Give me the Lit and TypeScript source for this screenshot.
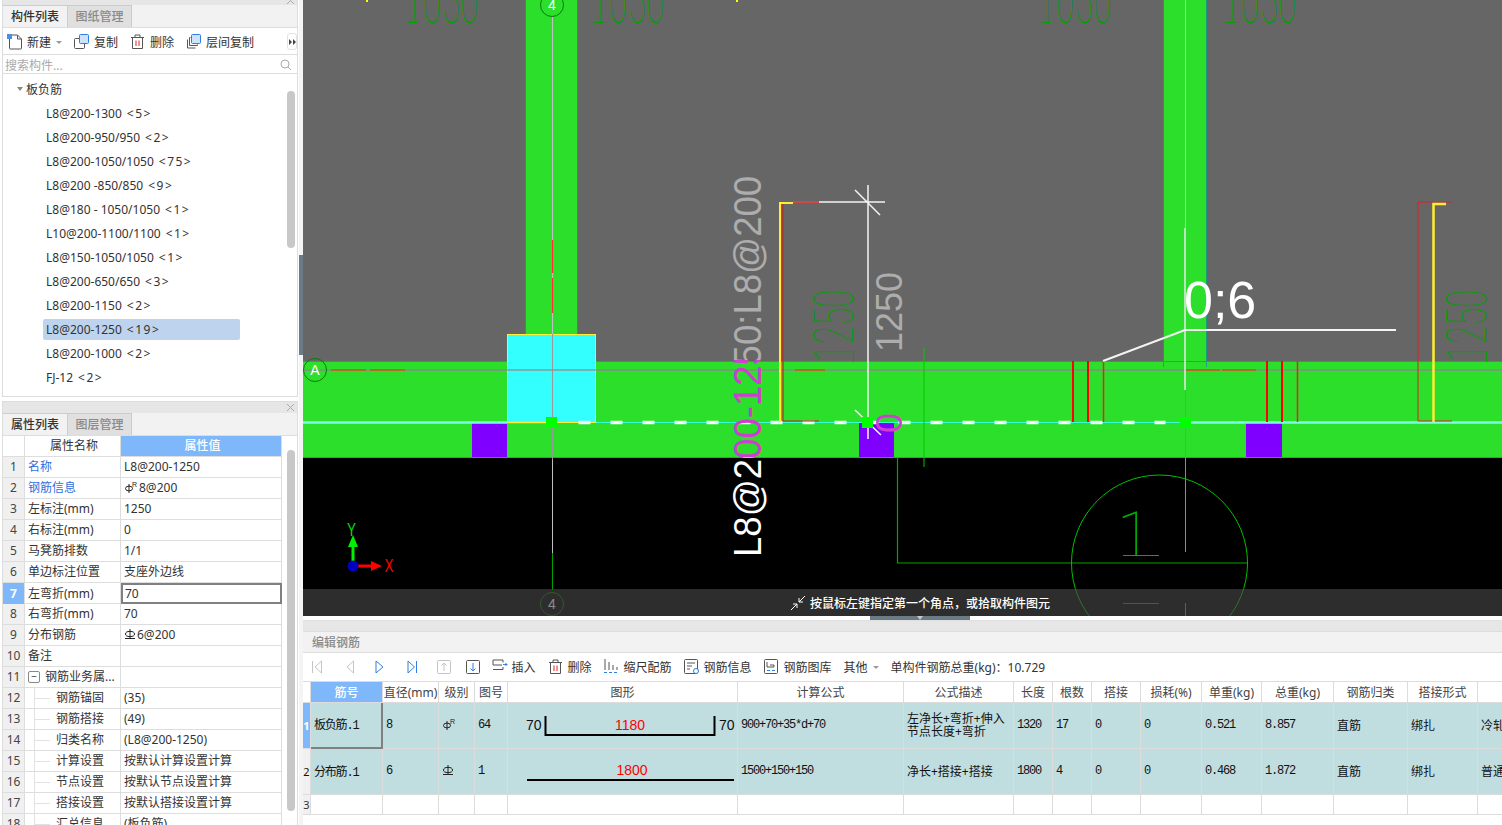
import { LitElement, html, svg, css } from 'lit';
import { customElement } from 'lit/decorators.js';

const TREE = [
  ['L8@200-1300', '<5>'], ['L8@200-950/950', '<2>'], ['L8@200-1050/1050', '<75>'], ['L8@200 -850/850', '<9>'],
  ['L8@180 - 1050/1050', '<1>'], ['L10@200-1100/1100', '<1>'], ['L8@150-1050/1050', '<1>'], ['L8@200-650/650', '<3>'],
  ['L8@200-1150', '<2>'], ['L8@200-1250', '<19>'], ['L8@200-1000', '<2>'], ['FJ-12', '<2>'],
];

// kind: link = blue name, child = indented under the tree line
const PROPS: { name: string; value: string; kind?: string; bar?: string }[] = [
  { name: '名称', value: 'L8@200-1250', kind: 'link' },
  { name: '钢筋信息', value: '8@200', kind: 'link', bar: 'r' },
  { name: '左标注(mm)', value: '1250' },
  { name: '右标注(mm)', value: '0' },
  { name: '马凳筋排数', value: '1/1' },
  { name: '单边标注位置', value: '支座外边线' },
  { name: '左弯折(mm)', value: '70' },
  { name: '右弯折(mm)', value: '70' },
  { name: '分布钢筋', value: '6@200', bar: 'd' },
  { name: '备注', value: '' },
  { name: '钢筋业务属...', value: '', kind: 'group' },
  { name: '钢筋锚固', value: '(35)', kind: 'child' },
  { name: '钢筋搭接', value: '(49)', kind: 'child' },
  { name: '归类名称', value: '(L8@200-1250)', kind: 'child' },
  { name: '计算设置', value: '按默认计算设置计算', kind: 'child' },
  { name: '节点设置', value: '按默认节点设置计算', kind: 'child' },
  { name: '搭接设置', value: '按默认搭接设置计算', kind: 'child' },
  { name: '汇总信息', value: '(板负筋)', kind: 'child' },
];

const HEAD = ['', '筋号', '直径(mm)', '级别', '图号', '图形', '计算公式', '公式描述', '长度', '根数', '搭接', '损耗(%)', '单重(kg)', '总重(kg)', '钢筋归类', '搭接形式', ''];

const barIcon = (kind: string) => kind === 'r'
  ? svg`<svg class="bar" width="14" height="12" viewBox="0 0 14 12"><ellipse cx="5" cy="6.5" rx="3.5" ry="2.4" fill="none" stroke="#222"/><path d="M5 2v9" stroke="#222"/><text class="sup" x="8" y="5">R</text></svg>`
  : svg`<svg class="bar" width="12" height="12" viewBox="0 0 12 12"><ellipse cx="6" cy="5" rx="4.5" ry="2.6" fill="none" stroke="#222"/><path d="M6 0v9M1 9.5h10" stroke="#222"/></svg>`;

const ICONS: Record<string, any> = {
  add: svg`<path d="M2.500 4v10a1 1 0 0 0 1 1h10a1 1 0 0 0 1-1V5l-4-4H5" fill="none" stroke="#555"/><path d="M10.500 1v4h4" fill="none" stroke="#555"/><rect x="0" y="0" width="5" height="5" fill="#4a90e2"/>`,
  copy: svg`<rect x="5.5" y=".5" width="9" height="9" rx="1" fill="#cfe2fb" stroke="#2f7fe0"/><path d="M5 4.5H1.5a1 1 0 0 0-1 1v8a1 1 0 0 0 1 1h8a1 1 0 0 0 1-1V10" fill="none" stroke="#555"/>`,
  del: svg`<path d="M1 3.5h13M5 3V1h5v2M2.5 4v10.5h10V4" fill="none" stroke="#555"/><path d="M6 6.5v5.5M9 6.5v5.5" stroke="#e02020"/>`,
  floor: svg`<rect x="5.5" y=".5" width="9" height="9" rx="1" fill="#cfe2fb" stroke="#2f7fe0"/><path d="M4.5 3.5h-1v8h8v-1M1.5 5.5v8.500h8" fill="none" stroke="#555"/>`,
  insert: svg`<path d="M11 3.500V1H1v5h9M1 10.500h10V8" fill="none" stroke="#555"/><path d="M11 5.500h4M13.500 4l1.500 1.500L13.500 7" fill="none" stroke="#2f7fe0"/>`,
  scale: svg`<path d="M1 0v11M5 3v8M9 6v5M13 8v3" stroke="#555"/><path d="M0 13.500h3M5 13.500h3M10 13.500h3" stroke="#2f7fe0"/>`,
  info: svg`<rect x=".5" y=".5" width="13" height="14" rx="1" fill="none" stroke="#555"/><path d="M3 4h8M3 7h5M3 10h3" stroke="#555"/><circle cx="12" cy="12" r="2.500" fill="#fff" stroke="#2f7fe0"/>`,
  lib: svg`<rect x=".5" y=".5" width="13" height="14" rx="1" fill="none" stroke="#555"/><path d="M3 3v5h7V6H6" fill="none" stroke="#555"/><path d="M3 11.500h3M8 11.500h3" stroke="#2f7fe0"/>`,
};

const icon = (name: string) => html`<svg class="ico" width="16" height="16" viewBox="0 0 16 16">${ICONS[name]}</svg>`;

const closeIcon = html`<svg class="close" width="9" height="9" viewBox="0 0 9 9"><path d="M1 1l7 7M8 1l-7 7" stroke="#aaa"/></svg>`;

const navIcon = (d: string, on: boolean) => html`<svg class="nav" width="10" height="14" viewBox="0 0 10 14"><path d=${d} fill="none" stroke=${on ? '#2f7fe0' : '#c4c4c4'}/></svg>`;

const boxIcon = (d: string, on: boolean) => html`<svg class="nav" width="14" height="14" viewBox="0 0 14 14"><rect x=".5" y=".5" width="13" height="13" rx="1" fill="none" stroke=${on ? '#555' : '#c4c4c4'}/><path d=${d} fill="none" stroke=${on ? '#2f7fe0' : '#c4c4c4'}/></svg>`;

@customElement('app-root')
export class AppRoot extends LitElement {
  static styles = css`
    :host {
      display: flex;
      width: 1502px;
      height: 825px;
      overflow: hidden;
      background: #fff;
      color: #333;
      font: 12px 'Noto Sans', 'Noto Sans CJK SC', sans-serif;
    }
    .left { width: 299px; flex: none; display: flex; flex-direction: column; }
    .splitter { width: 4px; flex: none; background: #f4f4f4; }
    .splitter i { display: block; height: 100px; margin-top: 255px; background: #6b7b85; }
    .main { flex: 1; min-width: 0; display: flex; flex-direction: column; }

    .panel { margin: 0 1px 0 2px; border: 1px solid #ddd; border-top: 0; display: flex; flex-direction: column; overflow: hidden; }
    .list-panel { height: 396px; flex: none; }
    .prop-panel { flex: 1; min-height: 0; margin-top: 4px; border-bottom: 0; }
    .strip { height: 5px; flex: none; background: #e6e6e6; display: flex; justify-content: flex-end; align-items: flex-end; overflow: hidden; }
    .prop-panel .strip { height: 12px; border-top: 1px solid #ddd; box-sizing: border-box; align-items: center; }
    .close { flex: none; margin-right: 2px; }
    .tabs { height: 23px; flex: none; display: flex; background: #f2f2f2; border-bottom: 1px solid #ddd; box-sizing: border-box; }
    .tab { width: 64px; text-align: center; line-height: 22px; font-weight: 500; color: #333; border-top: 1px solid #ccc; box-sizing: border-box; }
    .tab.off { width: 65px; background: #e0e0e0; color: #8a8a8a; border: 1px solid #ccc; border-bottom: 0; }

    .tools { height: 27px; flex: none; display: flex; align-items: center; gap: 12px; padding: 2px 0 0 4px; border-bottom: 1px solid #ddd; box-sizing: border-box; position: relative; }
    .tool { display: flex; align-items: center; gap: 4px; white-space: nowrap; }
    .ico, .nav { display: block; flex: none; }
    .caret { width: 0; height: 0; border: 3px solid transparent; border-top: 3px solid #999; border-bottom: 0; margin-left: 1px; }
    .more { position: absolute; right: 0; top: 5px; width: 10px; height: 17px; border: 1px solid #e4e4e4; border-radius: 3px; box-sizing: border-box; display: flex; align-items: center; justify-content: center; }
    .search { height: 19px; flex: none; display: flex; align-items: center; justify-content: space-between; padding: 1px 5px 0 2px; color: #aaa; border-bottom: 1px solid #ddd; box-sizing: border-box; }

    .tree { flex: 1; position: relative; padding-top: 3px; overflow: hidden; }
    .tree-row { height: 24px; display: flex; align-items: center; }
    .tree-root { padding-left: 14px; gap: 3px; }
    .tree-root b { width: 0; height: 0; border: 3.500px solid transparent; border-top: 4px solid #888; border-bottom: 0; }
    .leaf { margin-left: 40px; padding-left: 3px; width: 194px; height: 21px; line-height: 21px; border-radius: 2px; white-space: pre; display: flex; gap: 5px; }
    .leaf.sel { background: #bed4ee; }
    .leaf em { font-style: normal; letter-spacing: 1.500px; }
    .thumb { position: absolute; right: 2px; width: 8px; background: #c8c8c8; border-radius: 4px; }
    .tree .thumb { top: 17px; height: 157px; }
    .props .thumb { top: 14px; height: 361px; }

    .props { flex: 1; position: relative; overflow: hidden; }
    .prop-row { display: grid; grid-template-columns: 22px 96px 161px; height: 21px; width: 279px; box-sizing: border-box; border-bottom: 1px solid #ddd; line-height: 20px; }
    .prop-row > div { border-right: 1px solid #ddd; padding-left: 3px; white-space: nowrap; overflow: hidden; box-sizing: border-box; display: flex; align-items: center; }
    .prop-row .num { background: #f0f0f0; padding: 0; justify-content: center; color: #444; }
    .prop-row .num.on { background: #7eb8fa; color: #fff; font-weight: 700; }
    .prop-head { text-align: center; }
    .prop-head > div { justify-content: center; }
    .prop-head .on { background: #7eb8fa; color: #fff; font-weight: 500; }
    .link { color: #2f6fe0; }
    .child { padding-left: 31px !important; position: relative; }
    .child::before { content: ''; position: absolute; left: 9px; top: 0; bottom: 0; width: 15px; border-left: 1px solid #e2e2e2; background: linear-gradient(#e2e2e2, #e2e2e2) 0 10px / 100% 1px no-repeat; }
    .group { gap: 5px; }
    .group i { width: 10px; height: 10px; border: 1px solid #888; border-radius: 2px; font-style: normal; line-height: 9px; text-align: center; font-size: 10px; flex: none; }
    .editing { border: 2px solid #808080 !important; padding-left: 2px !important; height: 21px; background: #fff; }
    .bar { margin-right: 1px; }
    .sup { font: 7px 'Liberation Sans', sans-serif; fill: #222; }

    .cad { display: block; flex: none; }
    .stage { position: relative; height: 616px; flex: none; overflow: hidden; background: #000; }
    .hint { position: absolute; left: 0; right: 0; bottom: 0; height: 27px; padding-left: 35px; box-sizing: border-box; background: rgba(70, 70, 70, .64); color: #fff; display: flex; align-items: center; justify-content: center; gap: 4px; font-weight: 500; }
    .bubble { font: 14px 'Liberation Sans', sans-serif; }
    .mark { font-family: 'Liberation Sans', sans-serif; }
    .thin { font-family: Roboto, 'Liberation Sans', sans-serif; font-weight: 100; }
    .axis { font: 18px 'Liberation Sans', sans-serif; }

    .grip { height: 4px; flex: none; display: flex; justify-content: center; background: #fff; padding-left: 35px; }
    .grip i { display: flex; justify-content: center; width: 100px; background: #6b7b85; }
    .grip i::after { content: ''; width: 0; height: 0; border: 3px solid transparent; border-top: 4px solid #c8c8c8; border-bottom: 0; }
    .editor { flex: 1; min-height: 0; display: flex; flex-direction: column; overflow: hidden; }
    .editor .strip { height: 11px; border-top: 1px solid #e0e0e0; box-sizing: border-box; }
    .title { height: 22px; flex: none; background: #f2f2f2; color: #8a8a8a; line-height: 22px; padding-left: 9px; border-top: 1px solid #ddd; border-bottom: 1px solid #ddd; box-sizing: border-box; font-weight: 500; }
    .rebar-tools { height: 28px; flex: none; display: flex; align-items: center; gap: 12px; padding-left: 9px; white-space: nowrap; }
    .nav-group { display: flex; gap: 21.500px; }
    .box-group { display: flex; gap: 15px; margin-left: 8px; }
    .rebar-row { display: grid; grid-template-columns: 8px 72px 56px 36px 33px 230px 166px 110px 39px 39px 49px 61px 60px 72px 74px 70px 100px; width: 1275px; box-sizing: border-box; }
    .rebar-row > div { border-right: 1px solid #dcdcdc; border-bottom: 1px solid #dcdcdc; box-sizing: border-box; display: flex; align-items: center; padding-left: 3px; overflow: hidden; white-space: nowrap; position: relative; }
    .rebar-head { height: 22px; border-top: 1px solid #dcdcdc; color: #444; }
    .rebar-head > div { justify-content: center; padding: 0; }
    .rebar-head .on { background: #7eb8fa; color: #fff; font-weight: 500; }
    .rebar-body { height: 46px; color: #111; }
    .rebar-body > div { background: #c0dde0; padding-bottom: 2px; }
    .rebar-empty { height: 20px; }
    .rebar-row > .idx { padding: 0; justify-content: center; background: #f0f0f0; font-size: 11px; }
    .rebar-row > .idx.on { background: #7eb8fa; color: #fff; font-weight: 700; }
    .rebar-row > .picked { border-right: 2px solid #808080; border-bottom: 2px solid #808080; }
    .mono { font: 12px 'Liberation Mono', 'Noto Sans CJK SC', monospace; letter-spacing: -1.200px; }
    .wrap { white-space: normal !important; line-height: 13px; }
    .shape { position: absolute; left: 0; top: 0; }
    .shape text { font: 14px 'Liberation Sans', sans-serif; fill: #111; }
    .shape text.len { fill: #f00; }
  `;

  private renderCad() {
    return svg`
      <svg class="cad" width="1199" height="616" viewBox="303 0 1199 616">
        <defs>
          <linearGradient id="labelFill" gradientUnits="userSpaceOnUse" x1="0" y1="0" x2="403" y2="0">
            <stop offset="0.261" stop-color="#fff"/><stop offset="0.261" stop-color="#cf3fcf"/>
            <stop offset="0.514" stop-color="#cf3fcf"/><stop offset="0.514" stop-color="#adadad"/>
          </linearGradient>
        </defs>
        <rect x="303" y="0" width="1199" height="361" fill="#666"/>
        <rect x="303" y="458" width="1199" height="158" fill="#000"/>

        <path d="M367 0v2M737 0v2" stroke="#ff0" stroke-width="2"/>
        <rect x="525.500" y="-2" width="52" height="338" fill="#2bdf2b" stroke="#1a9a7a"/>
        <rect x="1163.500" y="-2" width="43" height="364" fill="#2bdf2b" stroke="#1a9a7a"/>
        <rect x="303" y="361" width="1199" height="97" fill="#2bdf2b"/>
        <path d="M303 361.500h1199M303 457.500h1199M1163.500 361v6M1206.500 361v6" stroke="#2a9a8a"/>

        <g class="thin" fill="#0a9a0a">
          <text font-size="62" transform="translate(404 23) scale(.55 1)">1050</text>
          <text font-size="62" transform="translate(590 23) scale(.55 1)">1050</text>
          <text font-size="62" transform="translate(1037 23) scale(.55 1)">1050</text>
          <text font-size="62" transform="translate(1222 23) scale(.55 1)">1050</text>
          <text font-size="56" transform="translate(853 362) rotate(-90) scale(.59 1)">1250</text>
          <text font-size="56" transform="translate(1486 362) rotate(-90) scale(.59 1)">1250</text>
        </g>
        <path d="M408 22.500h10M594 22.500h10M1041 22.500h10M1226 22.500h10M853.500 352v10M1486.500 352v10" stroke="#0a9a0a"/>

        <path d="M303 370h1199" stroke="#8a8a8a" stroke-width="1.500"/>
        <path d="M331 370h35M370 370h35M795 370h30M1185 370h35M1222 370h34" stroke="#c85a10" stroke-width="1.500"/>
        <path d="M552.500 0v553" stroke="#c0c0c0"/>
        <path d="M552.500 240v33M552.500 278v35" stroke="#ff3030"/>

        <rect x="507.500" y="334.500" width="88" height="88" fill="#33ffff" stroke="#ffee33"/>
        <path d="M552.500 334v126" stroke="#999"/>
        <path d="M507 370h89" stroke="#8a9a9a" stroke-width="1.500"/>

        <rect x="472" y="423" width="35" height="34" fill="#8000ff"/>
        <rect x="859" y="423" width="35" height="34" fill="#8000ff"/>
        <rect x="1246" y="423" width="36" height="34" fill="#8000ff"/>

        <path d="M303 422.500h204M1185 422.500h317" stroke="#7ffce8" stroke-width="2.500"/>
        <path d="M596 422.500h589" stroke="#33ffd8"/>
        <path d="M578.500 422.500h587" stroke="#eafff8" stroke-width="3.500" stroke-dasharray="12 20"/>
        <path d="M507 422.500h45" stroke="#ffee33" stroke-width="1.500"/>

        <path d="M1073 361v61M1088 361v61M1267 361v61M1282 361v61" stroke="#f00" stroke-width="2"/>
        <path d="M1103.500 361v61M1297.500 361v61" stroke="#f02020" stroke-width="1.500"/>
        <path d="M1185.500 0v228" stroke="#c0c0c0"/>
        <path d="M1185 228v162" stroke="#e8e8e8" stroke-width="1.500"/>
        <path d="M1185.500 390v162M1185.500 603v13" stroke="#8a8a8a"/>
        <path d="M1103 361l82-31h211" fill="none" stroke="#f4f4f4" stroke-width="2"/>
        <text class="mark" x="1184" y="318" font-size="52" fill="#fff">0;6</text>

        <path d="M793 203h-13v219" fill="none" stroke="#ffee33" stroke-width="2"/>
        <path d="M783 204v217h36" fill="none" stroke="#d02020" stroke-width="1.200"/>
        <path d="M793 202h26" stroke="#f04040" stroke-width="1.500"/>
        <path d="M819 202h66M868 185v254M855 190l25 25M855 410l26 25" stroke="#f4f4f4" stroke-width="1.500"/>
        <text class="mark" transform="translate(902 352) rotate(-90)" font-size="36" fill="#adadad">1250</text>
        <text class="mark" transform="translate(902 433) rotate(-90)" font-size="36" fill="#cf3fcf">0</text>
        <text class="mark" transform="translate(761 557) rotate(-90) scale(.95 1)" font-size="38.500" fill="url(#labelFill)">L8@200-1250:L8@200</text>

        <path d="M1418 202v219M1418 202h34M1418 421h34" fill="none" stroke="#e02020"/>
        <path d="M1446 204h-12.500v218" fill="none" stroke="#ffee33" stroke-width="2.500"/>

        <rect x="546" y="417" width="11" height="11" fill="#00ff00"/>
        <rect x="862" y="417" width="11" height="11" fill="#00ff00"/>
        <rect x="1180" y="417" width="11" height="11" fill="#00ff00"/>

        <path d="M924 348v119" stroke="#00c800"/>
        <path d="M897.500 458v105h350" fill="none" stroke="#00a800" stroke-width="1.200"/>
        <circle cx="1159.500" cy="563" r="88" fill="none" stroke="#00c000"/>
        <text class="thin" transform="translate(1117 555)" font-size="62" fill="#00b000">1</text>
        <path d="M1123 555.500h36M1123 603.500h36" stroke="#00b000"/>
        <path d="M552.500 553v37" stroke="#00a000"/>

        <circle cx="315" cy="370" r="11.500" fill="none" stroke="#0a7a0a"/>
        <text class="bubble" x="315" y="375" text-anchor="middle" fill="#fff">A</text>
        <circle cx="552" cy="5" r="11.500" fill="#2bdf2b" stroke="#0a7a0a"/>
        <text class="bubble" x="552" y="10" text-anchor="middle" fill="#fff">4</text>
        <circle cx="552" cy="604" r="11.500" fill="none" stroke="#0a7a0a"/>
        <text class="bubble" x="552" y="609" text-anchor="middle" fill="#fff">4</text>

        <path d="M353 566v-24" stroke="#00f000" stroke-width="3"/>
        <path d="M353 535l-5 12h10z" fill="#00f000"/>
        <path d="M353 566h20" stroke="#f00" stroke-width="3"/>
        <path d="M382 566l-11-5v10z" fill="#f00"/>
        <circle cx="353" cy="566" r="5.500" fill="#0000c0"/>
        <text class="axis" transform="translate(347 536) scale(.75 1)" fill="#00e000">Y</text>
        <text class="axis" transform="translate(384.500 572) scale(.75 1)" fill="#f00">X</text>
      </svg>
    `;
  }

  private renderProps() {
    return PROPS.map((p, i) => {
      const current = i === 6;
      return html`
        <div class="prop-row">
          <div class="num ${current ? 'on' : ''}">${i + 1}</div>
          <div class="${p.kind === 'link' ? 'link' : ''} ${p.kind === 'child' ? 'child' : ''} ${p.kind === 'group' ? 'group' : ''}">
            ${p.kind === 'group' ? html`<i>−</i>` : ''}${p.name}
          </div>
          <div class=${current ? 'editing' : ''}>${p.bar ? barIcon(p.bar) : ''}${p.value}</div>
        </div>
      `;
    });
  }

  render() {
    return html`
      <div class="left">
        <section class="panel list-panel">
          <div class="strip">${closeIcon}</div>
          <div class="tabs"><div class="tab">构件列表</div><div class="tab off">图纸管理</div></div>
          <div class="tools">
            <div class="tool">${icon('add')}新建<span class="caret"></span></div>
            <div class="tool">${icon('copy')}复制</div>
            <div class="tool">${icon('del')}删除</div>
            <div class="tool">${icon('floor')}层间复制</div>
            <div class="more"><svg width="7" height="6" viewBox="0 0 7 6"><path d="M0 0l3 3-3 3zM4 0l3 3-3 3z" fill="#444"/></svg></div>
          </div>
          <div class="search">
            <span>搜索构件...</span>
            <svg width="12" height="12" viewBox="0 0 12 12"><circle cx="5" cy="5" r="4" fill="none" stroke="#aaa"/><path d="M8 8l3 3" stroke="#aaa"/></svg>
          </div>
          <div class="tree">
            <div class="tree-row tree-root"><b></b><span>板负筋</span></div>
            ${TREE.map(([name, count], i) => html`<div class="tree-row"><div class="leaf ${i === 9 ? 'sel' : ''}"><span>${name}</span><em>${count}</em></div></div>`)}
            <div class="thumb"></div>
          </div>
        </section>
        <section class="panel prop-panel">
          <div class="strip">${closeIcon}</div>
          <div class="tabs"><div class="tab">属性列表</div><div class="tab off">图层管理</div></div>
          <div class="props">
            <div class="prop-row prop-head"><div></div><div>属性名称</div><div class="on">属性值</div></div>
            ${this.renderProps()}
            <div class="thumb"></div>
          </div>
        </section>
      </div>
      <div class="splitter"><i></i></div>
      <div class="main">
        <div class="stage">
          ${this.renderCad()}
          <div class="hint">
            <svg width="16" height="16" viewBox="0 0 16 16"><path d="M15 1L9 7M9 3v4h4M1 15l6-6M3 9h4v4" fill="none" stroke="#fff"/></svg>
            按鼠标左键指定第一个角点，或拾取构件图元
          </div>
        </div>
        <div class="grip"><i></i></div>
        <section class="editor">
          <div class="strip"></div>
          <div class="title">编辑钢筋</div>
          <div class="rebar-tools">
            <div class="nav-group">
              ${navIcon('M.5 1v12M9.500 1L3 7l6.500 6z', false)}
              ${navIcon('M9.500 1L3 7l6.500 6z', false)}
              ${navIcon('M1 1l7 6-7 6z', true)}
              ${navIcon('M1 1l6.500 6L1 13zM9.500 1v12', true)}
            </div>
            <div class="box-group">
              ${boxIcon('M7 11V3M4.500 5.500L7 3l2.500 2.500', false)}
              ${boxIcon('M7 3v8M4.500 8.500L7 11l2.500-2.500', true)}
            </div>
            <div class="tool">${icon('insert')}插入</div>
            <div class="tool">${icon('del')}删除</div>
            <div class="tool">${icon('scale')}缩尺配筋</div>
            <div class="tool">${icon('info')}钢筋信息</div>
            <div class="tool">${icon('lib')}钢筋图库</div>
            <div class="tool">其他<span class="caret"></span></div>
            <div>单构件钢筋总重(kg)：10.729</div>
          </div>
          <div class="rebar-row rebar-head">
            ${HEAD.map((h, i) => html`<div class=${i === 1 ? 'on' : ''}>${h}</div>`)}
          </div>
          <div class="rebar-row rebar-body">
            <div class="idx on">1</div>
            <div class="picked mono">板负筋.1</div>
            <div class="mono">8</div>
            <div>${barIcon('r')}</div>
            <div class="mono">64</div>
            <div>
              <svg class="shape" width="230" height="46" viewBox="0 0 230 46">
                <text x="18" y="27">70</text>
                <path d="M37.500 13v19h169V13" fill="none" stroke="#000" stroke-width="2"/>
                <text class="len" x="122" y="27" text-anchor="middle">1180</text>
                <text x="211" y="27">70</text>
              </svg>
            </div>
            <div class="mono">900+70+35*d+70</div>
            <div class="wrap">左净长+弯折+伸入节点长度+弯折</div>
            <div class="mono">1320</div><div class="mono">17</div><div class="mono">0</div><div class="mono">0</div>
            <div class="mono">0.521</div><div class="mono">8.857</div>
            <div>直筋</div><div>绑扎</div><div>冷轧带肋钢筋</div>
          </div>
          <div class="rebar-row rebar-body">
            <div class="idx">2</div>
            <div class="mono">分布筋.1</div>
            <div class="mono">6</div>
            <div>${barIcon('d')}</div>
            <div class="mono">1</div>
            <div>
              <svg class="shape" width="230" height="46" viewBox="0 0 230 46">
                <text class="len" x="124" y="26" text-anchor="middle">1800</text>
                <path d="M19 31h207" fill="none" stroke="#000" stroke-width="2"/>
              </svg>
            </div>
            <div class="mono">1500+150+150</div>
            <div>净长+搭接+搭接</div>
            <div class="mono">1800</div><div class="mono">4</div><div class="mono">0</div><div class="mono">0</div>
            <div class="mono">0.468</div><div class="mono">1.872</div>
            <div>直筋</div><div>绑扎</div><div>普通钢筋</div>
          </div>
          <div class="rebar-row rebar-empty">
            <div class="idx">3</div>
            ${HEAD.slice(1).map(() => html`<div></div>`)}
          </div>
        </section>
      </div>
    `;
  }
}
